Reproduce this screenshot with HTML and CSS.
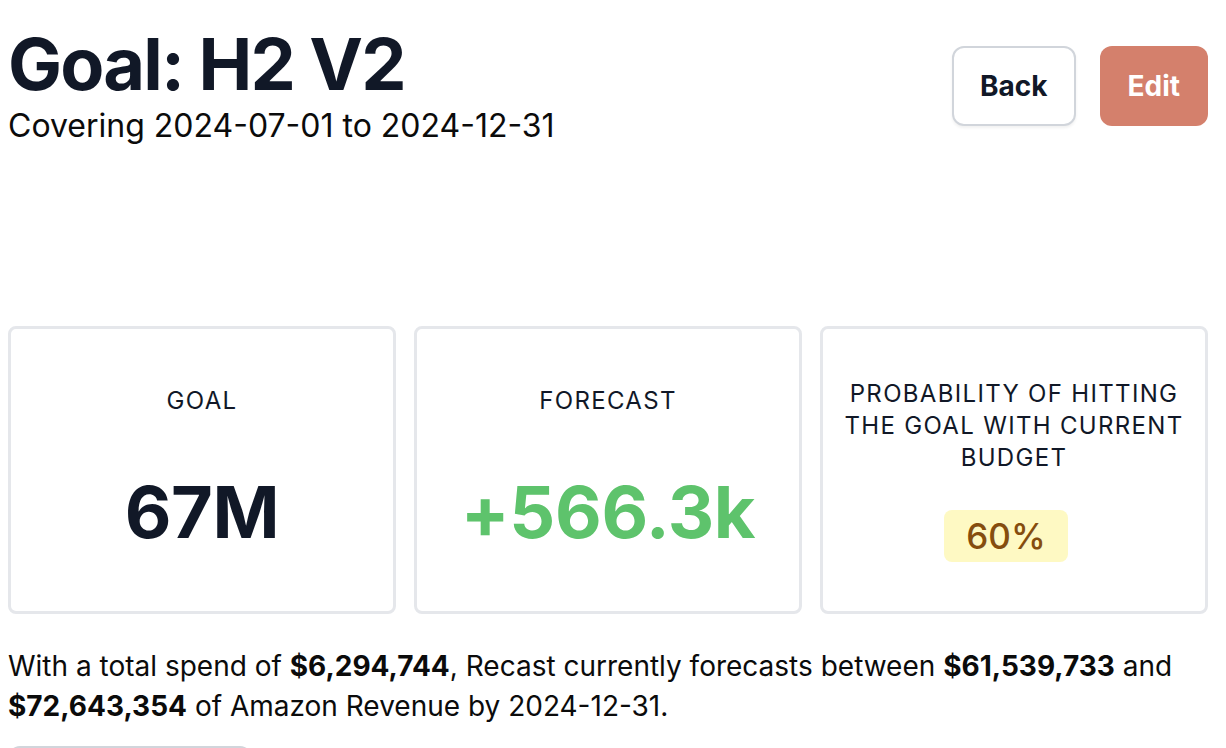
FILE: index.html
```html
<!DOCTYPE html>
<html lang="en">
<head>
    <meta charset="UTF-8">
    <meta name="viewport" content="width=device-width, initial-scale=1.0">
    <title>Goal: H2 V2</title>
    <link rel="stylesheet" href="styles.css">
</head>
<body>

<div class="page">
    <div class="page-header">
        <div>
            <h1 class="goal-title">Goal: H2 V2</h1>
            <p class="goal-range">Covering 2024-07-01 to 2024-12-31</p>
        </div>
        <div class="header-actions">
            <button type="button" class="btn btn-outline">Back</button>
            <button type="button" class="btn btn-primary">Edit</button>
        </div>
    </div>

    <div class="stats">
        <div class="stat-card">
            <div class="stat-label">Goal</div>
            <div class="stat-value">67M</div>
        </div>
        <div class="stat-card">
            <div class="stat-label">Forecast</div>
            <div class="stat-value positive">+566.3k</div>
        </div>
        <div class="stat-card">
            <div class="stat-label">Probability of hitting the goal with current budget</div>
            <div class="stat-badge">60%</div>
        </div>
    </div>

    <p class="summary">
        With a total spend of <strong>$6,294,744</strong>, Recast currently forecasts between <strong>$61,539,733</strong> and <strong>$72,643,354</strong> of Amazon Revenue by 2024-12-31.
    </p>

    <!-- next section starts just below the fold -->
    <div class="next-panel"></div>
</div>

</body>
</html>
```

FILE: styles.css
```css
body {
    margin: 0;
    font-family: Inter, "Noto Sans", Arial, sans-serif;
    color: #111827;
    background-color: #fff;
}

.page {
    padding: 24px 18px 0 8px;
}

.page-header {
    display: flex;
    justify-content: space-between;
    align-items: flex-start;
}

.goal-title {
    margin: 0;
    font-size: 72px;
    line-height: 80px;
    font-weight: 700;
    letter-spacing: -0.025em;
}

.goal-range {
    margin: -2px 0 0;
    font-size: 32px;
    line-height: 48px;
    color: #0b0b0b;
}

.header-actions {
    display: flex;
    gap: 24px;
    margin-top: 22px;
}

.btn {
    height: 80px;
    padding: 0 26px;
    border-radius: 12px;
    font-family: inherit;
    font-size: 28px;
    font-weight: 700;
    cursor: pointer;
}

.btn-outline {
    background: #fff;
    color: #111827;
    border: 2px solid #d1d5db;
    box-shadow: 0 2px 3px rgba(0, 0, 0, 0.06);
}

.btn-primary {
    background: #d4806c;
    color: #fff;
    border: none;
    padding: 0 28px;
}

.stats {
    display: grid;
    grid-template-columns: repeat(3, 1fr);
    gap: 18px;
    margin-top: 176px;
}

.stat-card {
    height: 288px;
    box-sizing: border-box;
    border: 3px solid #e5e7eb;
    border-radius: 8px;
    padding: 0 18px;
    display: flex;
    flex-direction: column;
    align-items: center;
    justify-content: center;
    text-align: center;
}

.stat-label {
    font-size: 24px;
    line-height: 32px;
    text-transform: uppercase;
    letter-spacing: 0.055em;
}

.stat-value {
    margin-top: 52px;
    font-size: 72px;
    line-height: 86px;
    font-weight: 700;
    letter-spacing: -0.005em;
}

.stat-value.positive {
    color: #5ec36c;
}

.stat-badge {
    margin: 36px 16px 0 0;
    padding: 6px 22px;
    border-radius: 8px;
    background: #fef9c3;
    color: #854d0e;
    font-size: 35px;
    line-height: 40px;
    font-weight: 500;
}

.summary {
    margin: 32px 0 0;
    font-size: 28px;
    line-height: 40px;
    color: #0b0b0b;
}

.next-panel {
    width: 240px;
    height: 80px;
    margin-top: 20px;
    border: 2px solid #d1d5db;
    border-radius: 12px;
}
```
